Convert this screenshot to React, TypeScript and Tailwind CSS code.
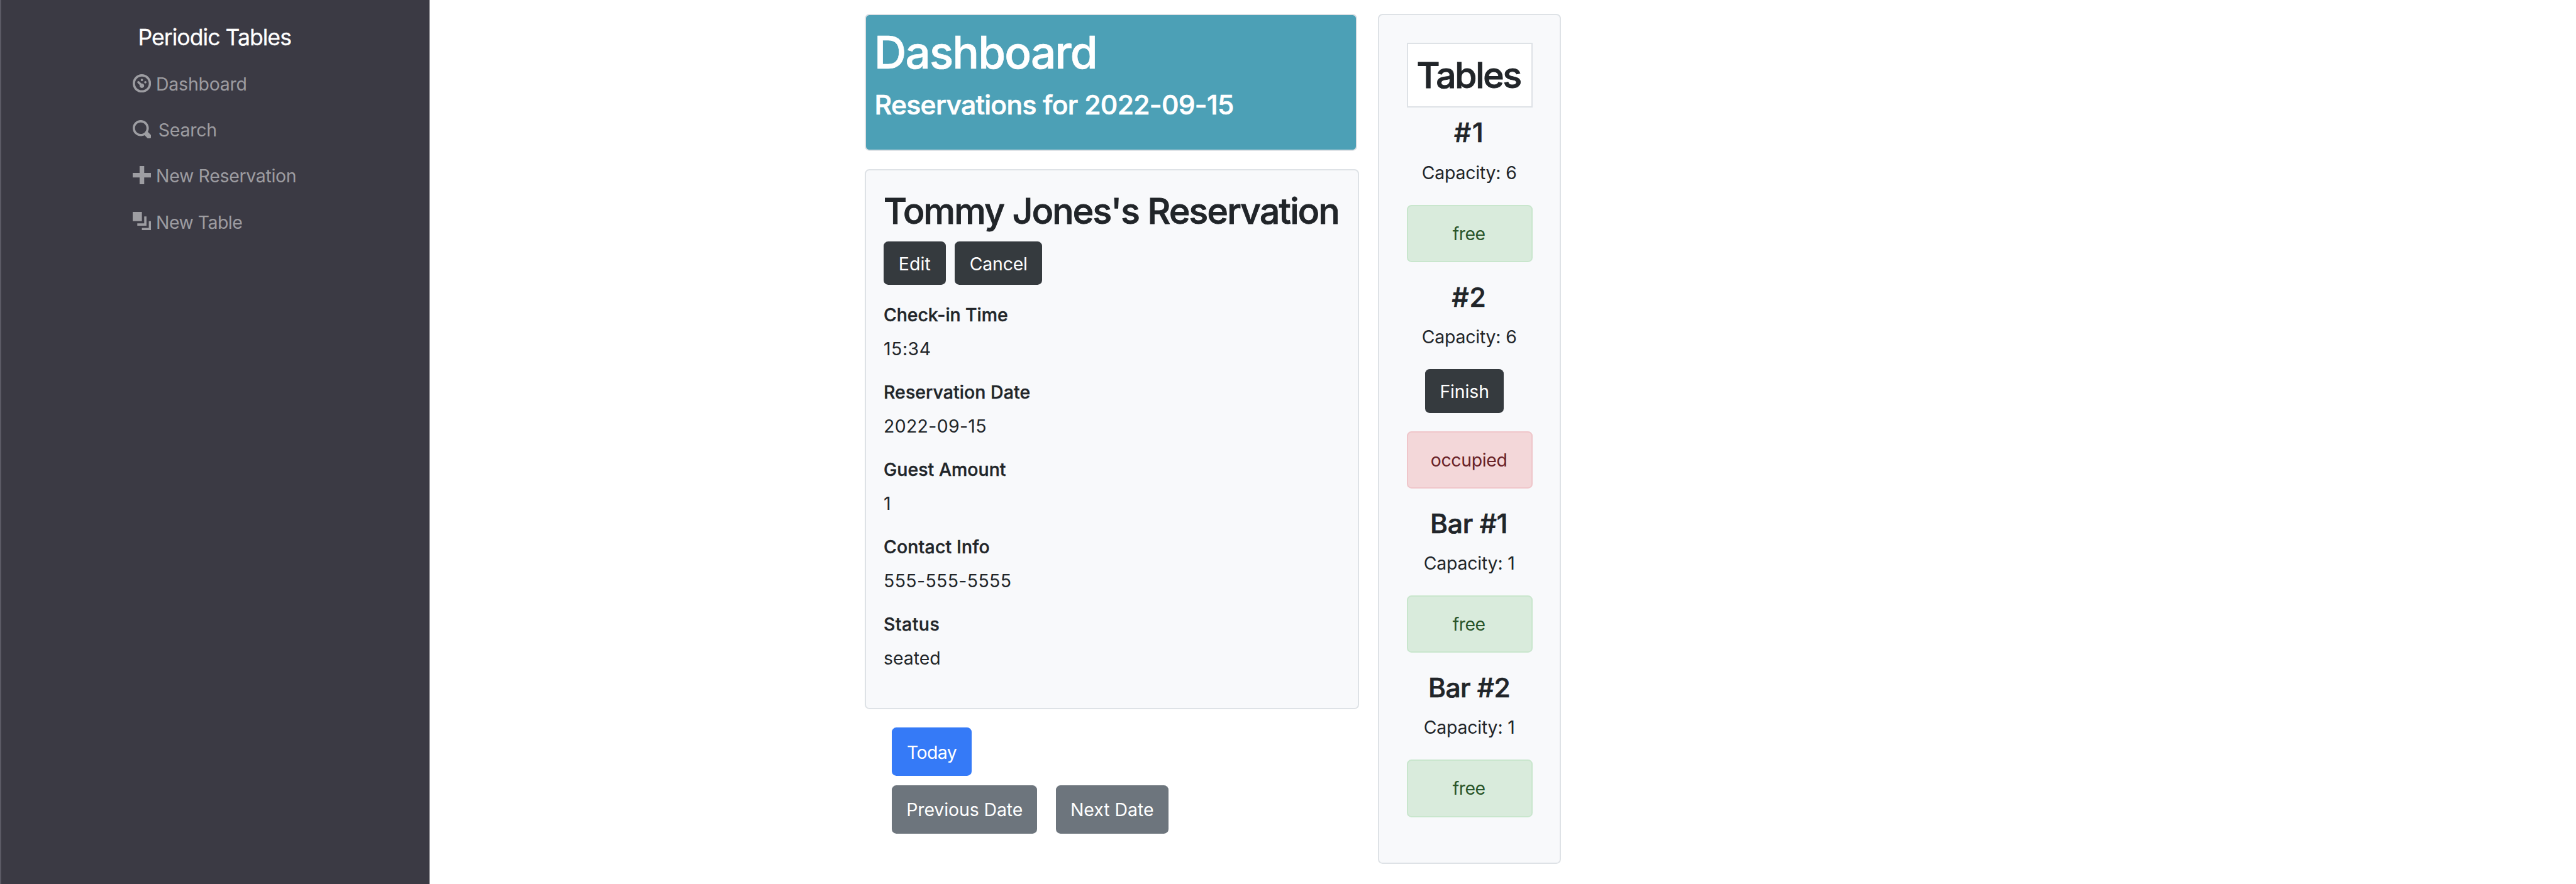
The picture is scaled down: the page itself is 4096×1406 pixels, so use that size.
function Glyph({ d }: { d: string }) {
  return (
    <svg viewBox="0 0 8 8" fill="currentColor" className="mb-1 h-[29.26px] w-[29.26px] shrink-0">
      <path d={d} />
    </svg>
  );
}

const nav = [
  {
    label: "Dashboard",
    cls: "ml-[7.6px] tracking-[-0.0065em]",
    d: "M4 0c-2.2 0-4 1.8-4 4s1.8 4 4 4 4-1.8 4-4-1.8-4-4-4zm0 1c1.66 0 3 1.34 3 3s-1.34 3-3 3-3-1.34-3-3 1.34-3 3-3zm0 1c-.28 0-.5.22-.5.5s.22.5.5.5.5-.22.5-.5-.22-.5-.5-.5zm-1.66 1a.5.5 0 0 0-.19.84l.91.91c-.02.08-.06.16-.06.25 0 .55.45 1 1 1s1-.45 1-1-.45-1-1-1c-.09 0-.17.04-.25.06l-.91-.91a.5.5 0 0 0-.44-.16.5.5 0 0 0-.06 0zm3.16 0c-.28 0-.5.22-.5.5s.22.5.5.5.5-.22.5-.5-.22-.5-.5-.5z",
  },
  {
    label: "Search",
    cls: "ml-[11.4px] tracking-[-0.007em]",
    d: "M3.5 0c-1.93 0-3.5 1.57-3.5 3.5s1.57 3.5 3.5 3.5c.59 0 1.17-.14 1.66-.41a1 1 0 0 0 .13.13l1 1a1.02 1.02 0 1 0 1.44-1.44l-1-1a1 1 0 0 0-.16-.13c.27-.49.44-1.06.44-1.66 0-1.93-1.55-3.5-3.5-3.5zm0 1c1.39 0 2.5 1.11 2.5 2.5 0 .66-.24 1.27-.66 1.72-.01.01-.02.02-.03.03a1 1 0 0 0-.13.13c-.44.4-1.04.63-1.69.63-1.39 0-2.5-1.11-2.5-2.5s1.11-2.5 2.5-2.5z",
  },
  {
    label: "New Reservation",
    cls: "ml-[7.6px] tracking-[-0.0097em]",
    d: "M3 0v3h-3v2h3v3h2v-3h3v-2h-3v-3h-2z",
  },
  {
    label: "New Table",
    cls: "ml-[7.6px] tracking-[-0.0174em]",
    d: "M0 0v4h4v-4h-4zm5 2v3h-3v1h4v-4h-1zm2 2v3h-3v1h4v-4h-1z",
  },
];

const details = [
  { label: "Check-in Time", value: "15:34", lc: "tracking-[-0.001em]", vc: "tracking-[0.019em]" },
  { label: "Reservation Date", value: "2022-09-15", lc: "tracking-[0.0034em]", vc: "tracking-[0.0127em]" },
  { label: "Guest Amount", value: "1", lc: "tracking-[0.0022em]", vc: "" },
  { label: "Contact Info", value: "555-555-5555", lc: "tracking-[0.0064em]", vc: "tracking-[0.0138em]" },
  { label: "Status", value: "seated", lc: "tracking-[0.0169em]", vc: "" },
];

const tables = [
  { name: "#1", capacity: 6, occupied: false, cls: "-ml-[1px] tracking-[0.0395em]" },
  { name: "#2", capacity: 6, occupied: true, cls: "-ml-[1px] tracking-[0.0214em]" },
  { name: "Bar #1", capacity: 1, occupied: false, cls: "-ml-[2px] tracking-[-0.0071em]" },
  { name: "Bar #2", capacity: 1, occupied: false, cls: "-ml-[1px] tracking-[-0.0125em]" },
];

export default function App() {
  return (
    <div className="flex h-[1406px] w-[4096px] overflow-hidden bg-white font-['Inter',sans-serif] text-[28.4px] leading-[43.9px] text-[#212529]">
      <nav className="w-[683px] shrink-0 border-l-2 border-[#5b5a65] bg-[#3b3a44] pt-[22.6px]">
        <h1 className="flex h-[75px] items-center pl-[217.4px] text-[35.5px] tracking-[-0.0264em] text-white [-webkit-text-stroke:0.3px_currentColor]">
          Periodic Tables
        </h1>
        <ul className="pl-[209.2px] text-white/50">
          {nav.map((n) => (
            <li key={n.label} className="flex h-[73.14px] items-center">
              <Glyph d={n.d} />
              <span className={n.cls}>{n.label}</span>
            </li>
          ))}
        </ul>
      </nav>

      <main className="ml-[692px] flex items-start pt-[22px]">
        <section className="w-[786.3px]">
          <header className="h-[217.5px] w-[782.6px] rounded-[7.3px] border-2 border-[#dee2e6] bg-[#4ca0b6] pt-[15.4px] pl-[13px] font-medium text-white">
            <h2 className="text-[71px] leading-[88px] tracking-[-0.0256em] [-webkit-text-stroke:0.7px_currentColor]">
              Dashboard
            </h2>
            <h3 className="mt-[13px] pl-[0.6px] text-[42.6px] leading-[53px] tracking-[-0.0156em] [-webkit-text-stroke:0.7px_currentColor]">
              Reservations for 2022-09-15
            </h3>
          </header>

          <article className="mt-[29.3px] h-[859.4px] rounded-[7.3px] border-2 border-[#dee2e6] bg-[#f8f9fb] pt-[30px] pl-[28px]">
            <h2 className="text-[56.8px] leading-[70px] font-medium tracking-[-0.0296em] whitespace-nowrap [-webkit-text-stroke:0.9px_currentColor]">
              Tommy Jones's Reservation
            </h2>
            <div className="mt-[13.2px] flex gap-[14.6px] text-white">
              <button className="h-[69.5px] w-[98.7px] rounded-[7.3px] bg-[#353a3e] pt-[2px] tracking-[0.003em]">
                Edit
              </button>
              <button className="h-[69.5px] w-[139px] rounded-[7.3px] bg-[#353a3e] pt-[2px] tracking-[-0.007em]">
                Cancel
              </button>
            </div>
            <dl className="mt-[25.4px]">
              {details.map((d) => (
                <div key={d.label} className="h-[123.05px]">
                  <dt className={`font-medium [-webkit-text-stroke:0.4px_currentColor] ${d.lc}`}>{d.label}</dt>
                  <dd className={`mt-[10.4px] ${d.vc}`}>{d.value}</dd>
                </div>
              ))}
            </dl>
          </article>

          <div className="mt-[29.3px] flex flex-col gap-[14.6px] pl-[43px] text-white">
            <div>
              <button className="block h-[76.8px] w-[127px] rounded-[7.3px] bg-[#357af7] pt-[2px] tracking-[-0.02em]">
                Today
              </button>
            </div>
            <div className="flex gap-[29.3px]">
              <button className="h-[76.8px] w-[231.4px] rounded-[7.3px] bg-[#6d757d] pt-[2px] tracking-[-0.0027em]">
                Previous Date
              </button>
              <button className="h-[76.8px] w-[179.2px] rounded-[7.3px] bg-[#6d757d] pt-[2px]">Next Date</button>
            </div>
          </div>
        </section>

        <aside className="ml-[29.7px] h-[1352px] w-[291.3px] rounded-[7.3px] border-2 border-[#dee2e6] bg-[#f8f9fb] px-[43.6px] pt-[43.7px] text-center">
          <h2 className="mb-[14.6px] flex h-[103.1px] items-center justify-center border-2 border-[#dee2e6] bg-white pt-px pr-[3px] text-[56.8px] font-medium tracking-[-0.0388em] [-webkit-text-stroke:0.9px_currentColor]">
            Tables
          </h2>
          {tables.map((t) => (
            <div key={t.name}>
              <h3
                className={`mb-[14.6px] text-[42.6px] leading-[52.7px] font-medium [-webkit-text-stroke:0.7px_currentColor] ${t.cls}`}
              >
                {t.name}
              </h3>
              <p className="-ml-px mb-[29.3px] tracking-[-0.0065em]">Capacity: {t.capacity}</p>
              {t.occupied && (
                <button className="mr-[16px] mb-[29.3px] h-[69.5px] w-[125.3px] rounded-[7.3px] bg-[#353a3e] pt-[2px] align-top tracking-[-0.004em] text-white">
                  Finish
                </button>
              )}
              <div
                className={
                  t.occupied
                    ? "mb-[29.3px] flex h-[91.4px] items-center justify-center rounded-[7.3px] border-2 border-[#efc6ca] bg-[#f3d7d9] pt-px pr-[2px] tracking-[-0.0115em] text-[#682126]"
                    : "mb-[29.3px] flex h-[91.4px] items-center justify-center rounded-[7.3px] border-2 border-[#c9e6cd] bg-[#d9ebdc] pt-px pr-[2px] tracking-[-0.02em] text-[#2a5529]"
                }
              >
                {t.occupied ? "occupied" : "free"}
              </div>
            </div>
          ))}
        </aside>
      </main>
    </div>
  );
}
